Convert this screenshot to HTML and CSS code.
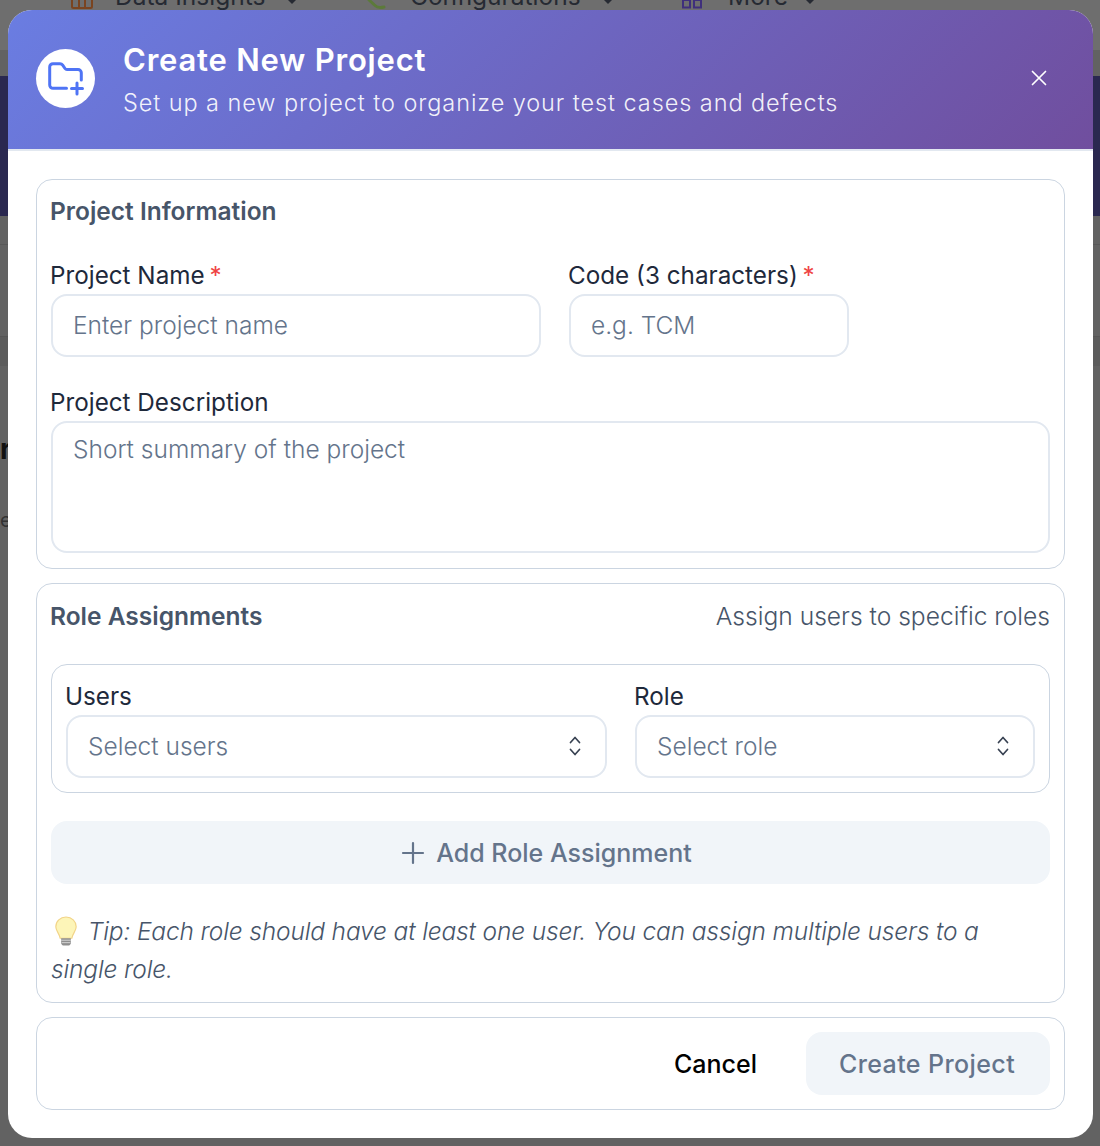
FILE: index.html
```html
<!DOCTYPE html>
<html lang="en">
<head>
    <meta charset="UTF-8">
    <meta name="viewport" content="width=device-width, initial-scale=1.0">
    <title>Create New Project</title>
    <link rel="stylesheet" href="styles.css">
</head>
<body>
    <!-- dimmed page behind the dialog -->
    <div class="backdrop">
        <div class="bg-nav">
            <svg class="bg-icon bg-icon-data" width="24" height="12" viewBox="0 0 24 12" fill="none" stroke="#7a4420" stroke-width="2"><path d="M2 0v6.500A1.500 1.500 0 0 0 3.500 8h17A1.500 1.500 0 0 0 22 6.500V0M9 0v8M15 0v8"/></svg>
            <span class="bg-item bg-item-data">Data Insights</span>
            <span class="bg-caret bg-caret-data"></span>
            <svg class="bg-icon bg-icon-config" width="24" height="12" viewBox="0 0 24 12" fill="none" stroke="#5c7a3a" stroke-width="3" stroke-linecap="round"><path d="M4 0l6 5.500c2 2 5 2.500 9 1.500"/></svg>
            <span class="bg-item bg-item-config">Configurations</span>
            <span class="bg-caret bg-caret-config"></span>
            <svg class="bg-icon bg-icon-more" width="22" height="10" viewBox="0 0 22 10" fill="none" stroke="#3f2f7c" stroke-width="2"><path d="M1 0h7v7.500H1zM12 0h7v7.500h-7z"/></svg>
            <span class="bg-item bg-item-more">More</span>
            <span class="bg-caret bg-caret-more"></span>
        </div>
        <div class="bg-band"></div>
        <div class="bg-line bg-line-1"></div>
        <div class="bg-strip"></div>
        <div class="bg-title">r</div>
        <div class="bg-sub">e</div>
    </div>

    <div class="modal">
        <div class="modal-header">
            <div class="header-icon">
                <svg width="36" height="36" viewBox="0 0 36 36" fill="none" stroke="#4f74f5" stroke-width="3" stroke-linecap="round" stroke-linejoin="round">
                    <path d="M18.500 28.300H5A3.300 3.300 0 0 1 1.700 25V7A3.300 3.300 0 0 1 5 3.700h7c1.200 0 2 .5 2.700 1.500L17 8.500c.5.700 1.200 1 2 1h11a3.300 3.300 0 0 1 3.300 3.300V20"/>
                    <path d="M29 23v11M23.500 28.500h11"/>
                </svg>
            </div>
            <div class="header-text">
                <h1>Create New Project</h1>
                <p>Set up a new project to organize your test cases and defects</p>
            </div>
            <svg class="close-icon" width="18" height="18" viewBox="0 0 18 18" fill="none" stroke="#fff" stroke-width="1.700" stroke-linecap="round">
                <path d="M2.500 2.500l13 13M15.500 2.500l-13 13"/>
            </svg>
        </div>

        <div class="modal-body">
            <section class="panel panel-info">
                <h2>Project Information</h2>
                <div class="field-row">
                    <div class="field field-name">
                        <label>Project Name <span class="req">*</span></label>
                        <div class="input">Enter project name</div>
                    </div>
                    <div class="field field-code">
                        <label>Code (3 characters) <span class="req">*</span></label>
                        <div class="input">e.g. TCM</div>
                    </div>
                </div>
                <div class="field field-desc">
                    <label>Project Description</label>
                    <div class="input textarea">Short summary of the project</div>
                </div>
            </section>

            <section class="panel panel-roles">
                <div class="roles-head">
                    <h2>Role Assignments</h2>
                    <span class="roles-hint">Assign users to specific roles</span>
                </div>
                <div class="assign-box">
                    <div class="field field-users">
                        <label>Users</label>
                        <div class="input select">
                            Select users
                            <svg class="chevrons" width="16" height="24" viewBox="0 0 16 24" fill="none" stroke="#374151" stroke-width="1.700" stroke-linecap="round" stroke-linejoin="round"><path d="M3.500 8.500L8 3.500l4.500 5M3.500 15.500L8 20.500l4.500-5"/></svg>
                        </div>
                    </div>
                    <div class="field field-role">
                        <label>Role</label>
                        <div class="input select">
                            Select role
                            <svg class="chevrons" width="16" height="24" viewBox="0 0 16 24" fill="none" stroke="#374151" stroke-width="1.700" stroke-linecap="round" stroke-linejoin="round"><path d="M3.500 8.500L8 3.500l4.500 5M3.500 15.500L8 20.500l4.500-5"/></svg>
                        </div>
                    </div>
                </div>
                <div class="add-btn">
                    <svg width="24" height="24" viewBox="0 0 24 24" fill="none" stroke="#64748b" stroke-width="2.200" stroke-linecap="round"><path d="M12 2v20M2 12h20"/></svg>
                    Add Role Assignment
                </div>
                <p class="tip">
                    <svg class="bulb" width="24" height="31" viewBox="0 0 24 32">
                        <path d="M12 1C6 1 1.500 5.500 1.500 11c0 4.500 3.500 6.500 4.500 12h12c1-5.500 4.500-7.500 4.500-12C22.500 5.500 18 1 12 1z" fill="#fdf5b8" stroke="#f2d488" stroke-width="1.200"/>
                        <path d="M7 23h10v5c0 1-1.500 2.500-2.500 2.500h-5C8.500 30.500 7 29 7 28z" fill="#8f8f8f"/>
                        <path d="M7 25h10M7.500 27.500h9" stroke="#d6d6d6" stroke-width="1"/>
                    </svg>
                    <em>Tip: Each role should have at least one user. You can assign multiple users to a<br>single role.</em>
                </p>
            </section>

            <div class="panel modal-footer">
                <span class="cancel-btn">Cancel</span>
                <span class="create-btn">Create Project</span>
            </div>
        </div>
    </div>
</body>
</html>
```

FILE: styles.css
```css
* {
    box-sizing: border-box;
}

body {
    margin: 0;
    height: 1146px;
    overflow: hidden;
    position: relative;
    background-color: #626262;
    font-family: 'Inter', 'Liberation Sans', sans-serif;
    color: #1e293b;
}

/* page behind the dialog */
.backdrop {
    position: absolute;
    inset: 0;
    overflow: hidden;
}
.bg-nav {
    position: absolute;
    top: 0;
    left: 0;
    width: 100%;
    height: 50px;
    background: #6e6e6e;
}
.bg-item {
    position: absolute;
    top: -19px;
    font-size: 24.5px;
    line-height: 30px;
    color: #262a33;
}
.bg-item-data { left: 115px; }
.bg-item-config { left: 410px; }
.bg-item-more { left: 728px; }
.bg-icon {
    position: absolute;
    top: 0;
}
.bg-icon-data { left: 70px; }
.bg-icon-config { left: 365px; }
.bg-icon-more { left: 682px; }
.bg-caret {
    position: absolute;
    top: 0;
    border: 4px solid transparent;
    border-top-color: #262a33;
    border-bottom: 0;
}
.bg-caret-data { left: 288px; }
.bg-caret-config { left: 604px; }
.bg-caret-more { left: 806px; }
.bg-band {
    position: absolute;
    top: 76px;
    left: 0;
    width: 100%;
    height: 140px;
    background: #2a2850;
}
.bg-line {
    position: absolute;
    left: 0;
    width: 100%;
    height: 1px;
    background: #585858;
}
.bg-line-1 { top: 244px; }
.bg-strip {
    position: absolute;
    top: 336px;
    left: 0;
    width: 100%;
    height: 30px;
    background: #5c5c5c;
    border-top: 1px solid #565656;
}
.bg-title {
    position: absolute;
    top: 432px;
    left: 0;
    font-size: 28px;
    font-weight: 700;
    color: #111;
}
.bg-sub {
    position: absolute;
    top: 508px;
    left: 0;
    font-size: 20px;
    color: #333;
}

.modal {
    position: absolute;
    top: 10px;
    left: 8px;
    width: 1085px;
    height: 1128px;
    background: #fff;
    border-radius: 24px;
    overflow: hidden;
}

.modal-header {
    height: 141px;
    display: flex;
    align-items: center;
    gap: 28px;
    padding: 0 45px 3px 28px;
    background: linear-gradient(135deg, #6a7de2 0%, #704e9e 100%);
    border-bottom: 2px solid #e2e8f0;
}
.header-icon {
    width: 59px;
    height: 59px;
    flex-shrink: 0;
    display: flex;
    align-items: center;
    justify-content: center;
    background: #fff;
    border-radius: 50%;
}
.header-text {
    flex: 1;
    padding-top: 2px;
    color: #fff;
}
.header-text h1 {
    margin: 0;
    font-size: 31px;
    line-height: 38px;
    font-weight: 600;
    letter-spacing: 0.8px;
}
.header-text p {
    margin: 9px 0 0;
    font-size: 23.5px;
    line-height: 30px;
    letter-spacing: 0.92px;
    color: rgba(255,255,255,0.92);
    font-weight: 300;
}

.modal-body {
    display: flex;
    flex-direction: column;
    gap: 14px;
    padding: 28px 28px 0;
}

.panel {
    border: 1px solid #cbd5e1;
    border-radius: 16px;
    padding: 14px;
}
.panel h2 {
    margin: 0 0 0 -1px;
    font-size: 24.5px;
    line-height: 36px;
    font-weight: 600;
    color: #475569;
}
.panel-info {
    height: 390px;
}
.panel-info h2 {
    line-height: 34px;
}
.panel-roles {
    height: 420px;
}

.field label {
    display: block;
    margin: 0 0 3px -1px;
    font-size: 24.25px;
    line-height: 30px;
    color: #1e293b;
}
.req {
    margin-left: -2px;
    color: #ef4444;
}
.input {
    height: 63px;
    padding: 0 22px 2px 20px;
    display: flex;
    align-items: center;
    justify-content: space-between;
    border: 2px solid #e2e8f0;
    border-radius: 16px;
    font-size: 24.5px;
    color: #64748b;
    font-weight: 300;
}
.textarea {
    height: 132px;
    align-items: flex-start;
    padding-top: 11px;
}

.field-row {
    display: flex;
    gap: 28px;
    margin-top: 33px;
}
.field-name { width: 490px; }
.field-code { width: 280px; }
.field-desc { margin-top: 31px; }

.roles-head {
    display: flex;
    justify-content: space-between;
    align-items: center;
}
.roles-hint {
    font-size: 24.6px;
    font-weight: 300;
    color: #475569;
}
.assign-box {
    display: flex;
    gap: 28px;
    margin-top: 30px;
    padding: 17px 14px 14px;
    border: 1px solid #cbd5e1;
    border-radius: 16px;
    height: 129px;
}
.field-users { width: 541px; }
.field-role { width: 400px; }
.chevrons {
    flex-shrink: 0;
}

.add-btn {
    height: 63px;
    margin-top: 28px;
    padding-right: 8px;
    display: flex;
    align-items: center;
    justify-content: center;
    gap: 11px;
    background: #f1f5f9;
    border-radius: 16px;
    font-size: 25px;
    font-weight: 500;
    color: #64748b;
}

.tip {
    margin: 28px 0 0;
    font-size: 24.5px;
    line-height: 38px;
    letter-spacing: -0.15px;
    font-weight: 300;
    color: #475569;
}
.bulb {
    vertical-align: -7px;
    margin-left: 3px;
    margin-right: 3px;
}

.modal-footer {
    height: 93px;
    display: flex;
    align-items: center;
    justify-content: flex-end;
    gap: 49px;
}
.cancel-btn {
    font-size: 25px;
    font-weight: 500;
    color: #000;
}
.create-btn {
    width: 244px;
    height: 63px;
    padding-right: 2px;
    display: flex;
    align-items: center;
    justify-content: center;
    background: #f1f5f9;
    border-radius: 16px;
    font-size: 25px;
    letter-spacing: 0.4px;
    font-weight: 500;
    color: #64748b;
}
```
